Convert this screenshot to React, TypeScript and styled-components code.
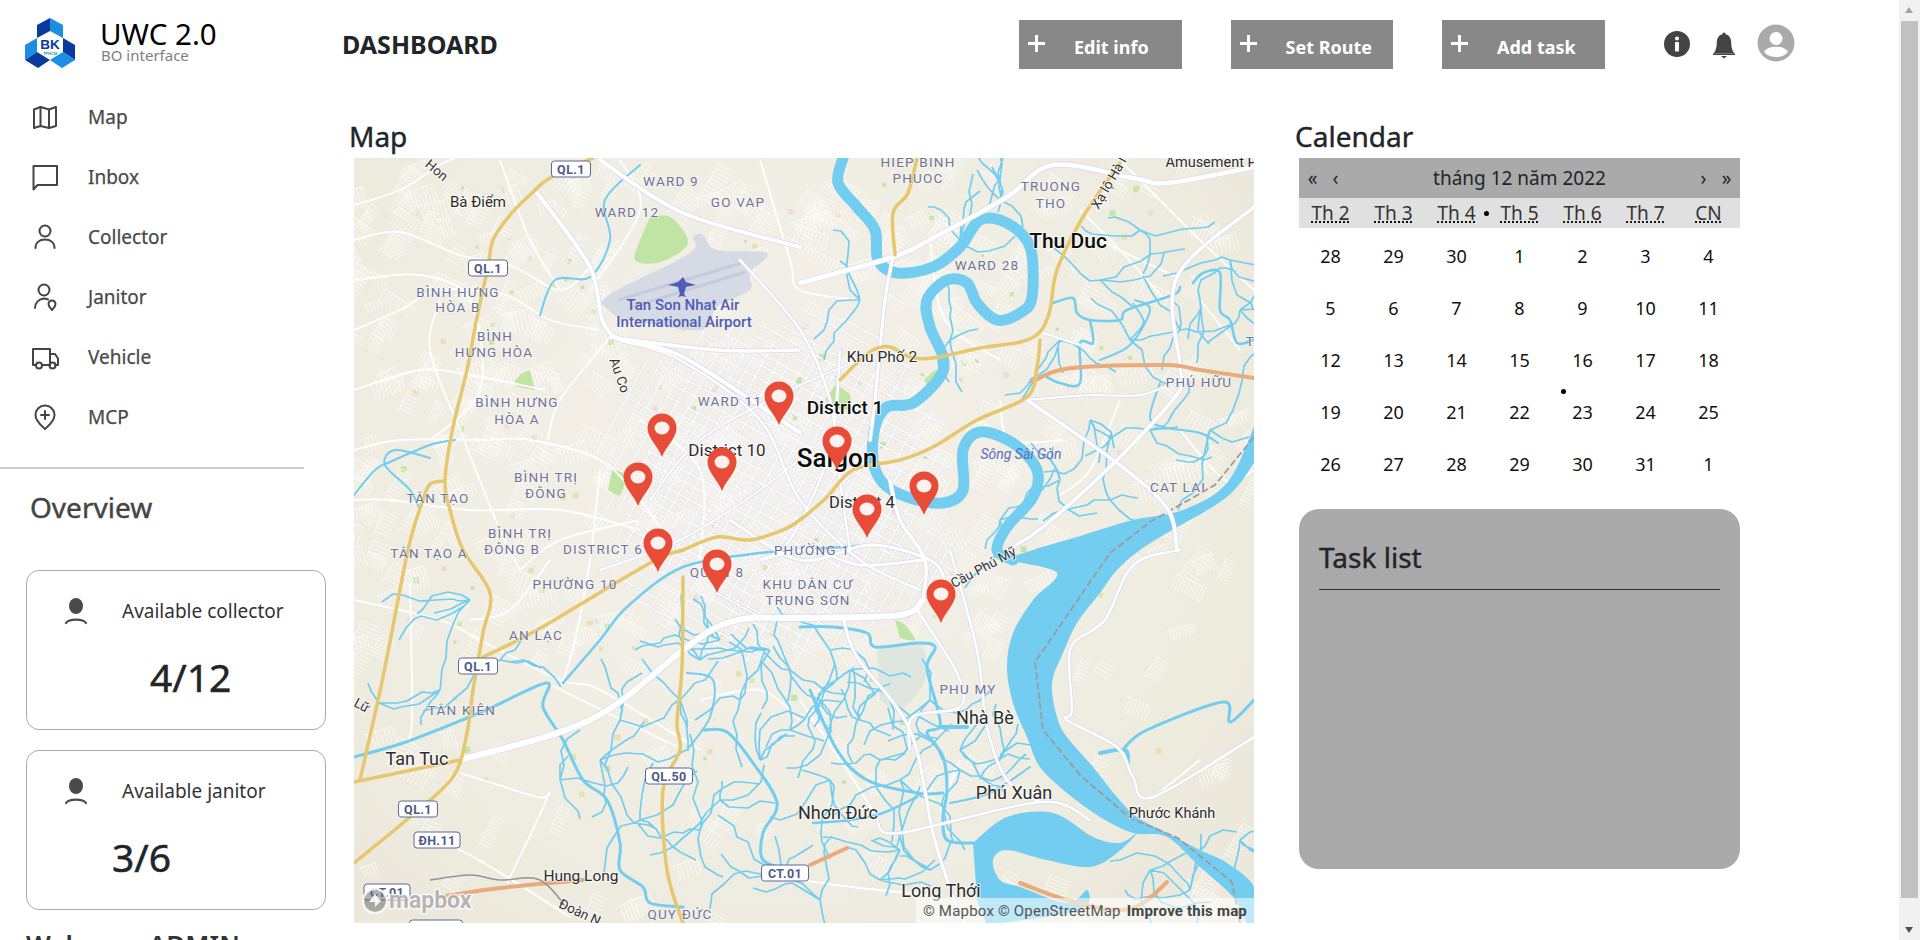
import React from 'react';
import styled, { createGlobalStyle } from 'styled-components';

type Pt = [number, number];

const fontStack = '"Noto Sans", "Open Sans", sans-serif';
const mapFont = 'Roboto, "Noto Sans", sans-serif';

const GlobalStyle = createGlobalStyle`
  body {
    margin: 0;
    background: #fff;
    font-family: ${fontStack};
    color: #212529;
  }
  * {
    box-sizing: border-box;
  }
`;

const Page = styled.div`
  display: flex;
  min-height: 970px;
`;

const ScrollTrack = styled.div`
  position: fixed;
  top: 0;
  right: 0;
  bottom: 0;
  width: 21px;
  background: #f1f1f1;
`;

const ScrollThumb = styled.div`
  position: absolute;
  top: 21px;
  left: 2px;
  width: 17px;
  height: 877px;
  background: #c1c1c1;
`;

const ScrollArrow = styled.i<{ $down?: boolean }>`
  position: absolute;
  left: 6px;
  top: ${(p) => (p.$down ? 927 : 7)}px;
  border-left: 4.5px solid transparent;
  border-right: 4.5px solid transparent;
  ${(p) => (p.$down ? 'border-top: 6px solid #505050;' : 'border-bottom: 6px solid #a3a3a3;')}
`;

const Sidebar = styled.aside`
  width: 304px;
  flex: none;
  display: flex;
  flex-direction: column;
`;

const Brand = styled.div`
  display: flex;
  height: 87px;
  padding: 18px 0 0 25px;
  gap: 25px;
`;

const BrandText = styled.div`
  display: flex;
  flex-direction: column;
  margin-top: -1px;
`;

const BrandTitle = styled.div`
  font-size: 29.5px;
  line-height: 34px;
  color: #000;
`;

const BrandSub = styled.div`
  margin-top: -4px;
  margin-left: 1px;
  font-size: 15px;
  line-height: 16px;
  color: #808080;
`;

const Nav = styled.nav`
  display: flex;
  flex-direction: column;
`;

const NavItem = styled.a`
  height: 60px;
  display: flex;
  align-items: center;
  gap: 28px;
  padding-left: 30px;
  font-size: 19px;
  -webkit-text-stroke: 0.25px #494949;
  color: #494949;
`;

const NavIcon = styled.svg`
  width: 30px;
  height: 30px;
  flex: none;
  fill: none;
  stroke: #444;
  stroke-width: 2;
  stroke-linecap: round;
  stroke-linejoin: round;
`;

const Divider = styled.hr`
  width: 304px;
  height: 2px;
  margin: 20px 0 0;
  border: 0;
  background: #ccc;
`;

const OverviewTitle = styled.h2`
  margin: 20px 0 45px 30px;
  font-size: 28px;
  line-height: 36px;
  font-weight: 400;
  -webkit-text-stroke: 0.4px #444;
  color: #444;
`;

const Cards = styled.div`
  display: flex;
  flex-direction: column;
  gap: 20px;
  margin-left: 26px;
`;

const Card = styled.div`
  width: 300px;
  height: 160px;
  padding: 26px 0 0 37px;
  border: 1px solid #aaa;
  border-radius: 13px;
`;

const CardHead = styled.div`
  display: flex;
  align-items: center;
  gap: 34px;
  font-size: 19px;
  line-height: 28px;
  color: #333;
`;

const CardValue = styled.div<{ $indent: number }>`
  margin: 24px 0 0 ${(p) => p.$indent}px;
  font-size: 39px;
  line-height: 56px;
  -webkit-text-stroke: 0.5px #212529;
  color: #212529;
`;

const Welcome = styled.h2`
  margin: 16px 0 0 26px;
  font-size: 26px;
  line-height: 36px;
  font-weight: 600;
  color: #333;
`;

const Main = styled.main`
  flex: 1;
  min-width: 0;
  display: flex;
  flex-direction: column;
`;

const Header = styled.header`
  display: flex;
  align-items: flex-start;
  height: 118px;
  padding: 20px 0 0 38px;
  gap: 49px;
`;

const PageTitle = styled.h1`
  width: 628px;
  margin: 0;
  font-size: 25px;
  line-height: 48px;
  font-weight: 700;
  color: #212529;
`;

const ActionButton = styled.button`
  width: 162.5px;
  height: 49px;
  padding: 15px 0 0 9px;
  display: flex;
  align-items: flex-start;
  gap: 29px;
  border: 0;
  background: #888;
  color: #fff;
  font-family: ${fontStack};
  font-size: 18px;
  line-height: 24px;
  font-weight: 700;
`;

const HeaderIcons = styled.div`
  display: flex;
  align-items: center;
  height: 48px;
  margin-left: 9px;
`;

const Content = styled.div`
  display: flex;
  padding-left: 45px;
`;

const MapSection = styled.section`
  width: 946px;
  flex: none;
`;

const SectionTitle = styled.h2`
  margin: 0 0 4px;
  font-size: 28px;
  line-height: 36px;
  font-weight: 400;
  -webkit-text-stroke: 0.4px #212529;
  color: #212529;
`;

const MapFrame = styled.div`
  position: relative;
  width: 900px;
  height: 765px;
  margin-left: 5px;
  overflow: hidden;
`;

const MapCanvas = styled.svg`
  display: block;
  width: 900px;
  height: 765px;
`;

const Attribution = styled.div`
  position: absolute;
  right: 0;
  bottom: 0;
  height: 25px;
  padding: 0 7px 0 7px;
  display: flex;
  gap: 6px;
  align-items: center;
  background: rgba(255, 255, 255, 0.55);
  font-family: ${mapFont};
  font-size: 15px;
  letter-spacing: 0.2px;
  color: #555;
`;

const AttributionStrong = styled.span`
  font-weight: 700;
  color: #444;
`;

const CalendarSection = styled.section`
  width: 445px;
  flex: none;
`;

const CalendarBody = styled.div`
  position: relative;
  width: 441px;
  margin-left: 4px;
`;

const CalendarNav = styled.div`
  height: 40px;
  display: flex;
  align-items: center;
  padding: 0 2px;
  background: #aaa;
  font-size: 19px;
  color: #212529;
`;

const CalendarArrow = styled.span`
  width: 23px;
  text-align: center;
`;

const CalendarMonth = styled.span`
  flex: 1;
  text-align: center;
`;

const Weekdays = styled.div`
  display: grid;
  grid-template-columns: repeat(7, 63px);
  height: 30px;
  margin-bottom: 2px;
  background: #e0e0e0;
`;

const Weekday = styled.span`
  font-size: 19px;
  line-height: 31px;
  text-align: center;
  color: #333;
  text-decoration: underline dotted #111;
  text-underline-offset: 2px;
`;

const Days = styled.div`
  display: grid;
  grid-template-columns: repeat(7, 63px);
  grid-auto-rows: 52px;
`;

const Day = styled.span`
  font-size: 18px;
  line-height: 52px;
  text-align: center;
  color: #111;
`;

const StrayDot = styled.i<{ $left: number; $top: number }>`
  position: absolute;
  left: ${(p) => p.$left}px;
  top: ${(p) => p.$top}px;
  width: 5px;
  height: 5px;
  border-radius: 50%;
  background: #000;
`;

const TaskPanel = styled.div`
  width: 441px;
  height: 360px;
  margin: 19px 0 0 4px;
  padding: 29px 20px 0;
  border-radius: 20px;
  background: #aaa;
`;

const TaskTitle = styled.h3`
  margin: 0;
  padding-bottom: 12px;
  font-size: 28px;
  line-height: 39px;
  font-weight: 400;
  -webkit-text-stroke: 0.4px #212529;
  color: #212529;
  border-bottom: 1px solid #333;
`;

const PlaceLabel = styled.text<{ $size: number; $heavy?: boolean }>`
  font-family: ${mapFont};
  font-size: ${(p) => p.$size}px;
  font-weight: ${(p) => (p.$heavy ? 500 : 400)};
  fill: ${(p) => (p.$heavy ? '#0c0c0c' : '#2c2c2c')};
  stroke: rgba(255, 255, 255, 0.7);
  stroke-width: 2px;
  paint-order: stroke;
  text-anchor: middle;
  dominant-baseline: central;
`;

const AreaLabel = styled.text`
  font-family: ${mapFont};
  font-size: 13.5px;
  letter-spacing: 1.2px;
  fill: #6c7398;
  stroke: rgba(255, 255, 255, 0.55);
  stroke-width: 1.5px;
  paint-order: stroke;
  text-anchor: middle;
  dominant-baseline: central;
`;

const AirportLabel = styled.text`
  font-family: ${mapFont};
  font-size: 15px;
  font-weight: 500;
  fill: #4f5cb8;
  text-anchor: middle;
  dominant-baseline: central;
`;

const WaterLabel = styled.text`
  font-family: ${mapFont};
  font-size: 14px;
  font-style: italic;
  fill: #5b6cc0;
  text-anchor: middle;
  dominant-baseline: central;
`;

const RoadLabel = styled.text`
  font-family: ${mapFont};
  font-size: 13.5px;
  fill: #333;
  stroke: rgba(255, 255, 255, 0.7);
  stroke-width: 2px;
  paint-order: stroke;
  text-anchor: middle;
  dominant-baseline: central;
`;

const ShieldLabel = styled.text`
  font-family: ${mapFont};
  font-size: 12.5px;
  font-weight: 700;
  letter-spacing: 0.4px;
  fill: #4e5a86;
  text-anchor: middle;
  dominant-baseline: central;
`;

const MapboxWord = styled.text`
  font-family: ${mapFont};
  font-size: 23px;
  font-weight: 700;
  fill: #7a7a7a;
  fill-opacity: 0.55;
  stroke: rgba(255, 255, 255, 0.85);
  stroke-width: 2.5px;
  paint-order: stroke;
  dominant-baseline: central;
`;

// catmull-rom through the points, keeps rivers and highways from looking like zigzags
const smooth = (pts: Pt[]): string => {
  let d = `M${pts[0][0]} ${pts[0][1]}`;
  for (let i = 0; i < pts.length - 1; i++) {
    const a = pts[Math.max(i - 1, 0)];
    const b = pts[i];
    const c = pts[i + 1];
    const e = pts[Math.min(i + 2, pts.length - 1)];
    const c1x = b[0] + (c[0] - a[0]) / 6;
    const c1y = b[1] + (c[1] - a[1]) / 6;
    const c2x = c[0] - (e[0] - b[0]) / 6;
    const c2y = c[1] - (e[1] - b[1]) / 6;
    d += `C${c1x.toFixed(1)} ${c1y.toFixed(1)} ${c2x.toFixed(1)} ${c2y.toFixed(1)} ${c[0]} ${c[1]}`;
  }
  return d;
};

const poly = (pts: Pt[]): string => `${smooth(pts)}Z`;

const seeded = (seed: number) => () => {
  seed = (seed * 1664525 + 1013904223) % 4294967296;
  return seed / 4294967296;
};

// little combs of parallel streets, this is what gives the tiles their fine texture
const buildTexture = () => {
  const rand = seeded(77);
  let combs = '';
  for (let i = 0; i < 800; i++) {
    const x = 354 + rand() * 900;
    const y = 158 + rand() * 765;
    const keep = x < 1000 && y < 640 ? 1 : y < 560 ? 0.55 : 0.2;
    if (rand() > keep) continue;
    const a = [0.5, 2.07, 1.2][Math.floor(rand() * 3)] + (rand() - 0.5) * 0.3;
    const cx = Math.cos(a);
    const sy = Math.sin(a);
    const count = 4 + Math.floor(rand() * 7);
    const len = 8 + rand() * 14;
    const gap = 2.8 + rand() * 1.6;
    for (let k = 0; k < count; k++) {
      const px = x - sy * gap * k;
      const py = y + cx * gap * k;
      combs += `M${px.toFixed(1)} ${py.toFixed(1)}l${(cx * len).toFixed(1)} ${(sy * len).toFixed(1)}`;
    }
    combs += `M${x.toFixed(1)} ${y.toFixed(1)}l${(-sy * gap * count).toFixed(1)} ${(cx * gap * count).toFixed(1)}`;
  }
  return combs;
};

const buildCityGrid = () => {
  const rand = seeded(5);
  const R = 185;
  let d = '';
  [0.5, 2.07].forEach((a) => {
    const ux = Math.cos(a);
    const uy = Math.sin(a);
    for (let k = -16; k <= 16; k++) {
      const off = k * 11.5 + rand() * 4;
      if (Math.abs(off) >= R) continue;
      const half = Math.sqrt(R * R - off * off) * (0.6 + rand() * 0.4);
      const mx = 775 - uy * off;
      const my = 490 + ux * off;
      d += `M${(mx - ux * half).toFixed(1)} ${(my - uy * half).toFixed(1)}L${(mx + ux * half).toFixed(1)} ${(my + uy * half).toFixed(1)}`;
    }
  });
  return d;
};

const buildSpecks = () => {
  const rand = seeded(99);
  const items: { x: number; y: number; s: number; c: string }[] = [];
  const colours = ['#c3e5a6', '#ebdcdd', '#e6e0b4', '#c3e5a6', '#e6e0b4'];
  for (let i = 0; i < 130; i++) {
    const x = 400 + rand() * 760;
    const y = 180 + rand() * 620;
    items.push({ x, y, s: 2.5 + rand() * 4, c: colours[i % colours.length] });
  }
  return items;
};

const buildCanals = () => {
  const rand = seeded(1234);
  const starts: Pt[] = [
    [700, 660], [740, 700], [720, 800], [760, 760], [820, 700], [860, 720], [880, 760], [830, 780],
    [900, 780], [930, 700], [600, 760], [560, 780], [640, 820], [700, 830], [770, 880], [820, 900],
    [880, 880], [960, 770], [1000, 760], [1060, 340], [1090, 420], [1130, 340], [1200, 300], [1230, 260],
    [1150, 430], [1210, 430], [1140, 230], [1110, 500], [1060, 480], [1150, 870], [1190, 890], [1240, 840],
    [880, 690], [830, 650], [790, 670], [470, 600], [500, 660], [440, 690], [620, 720], [1000, 520],
    [960, 240], [1000, 180], [950, 340], [860, 300], [1180, 330], [1100, 280], [720, 640], [770, 650],
    [790, 730], [850, 670], [900, 850], [930, 870], [680, 700], [960, 750], [1000, 200], [1240, 310],
  ];
  let d = '';
  starts.forEach(([sx, sy]) => {
    for (let b = 0; b < 4; b++) {
      let x = sx;
      let y = sy;
      let angle = rand() * Math.PI * 2;
      d += `M${x} ${y}`;
      const steps = 3 + Math.floor(rand() * 5);
      for (let s = 0; s < steps; s++) {
        angle += (rand() - 0.5) * 1.5;
        const len = 6 + rand() * 13;
        x += Math.cos(angle) * len;
        y += Math.sin(angle) * len;
        d += `L${x.toFixed(0)} ${y.toFixed(0)}`;
      }
    }
  });
  return d;
};

const texture = buildTexture();
const cityGrid = buildCityGrid();
const specks = buildSpecks();
const canals = buildCanals();

const highways: Pt[][] = [
  [[593, 158], [550, 178], [533, 192], [510, 215], [493, 240], [488, 267], [477, 317], [467, 370], [453, 427], [445, 480], [450, 510], [463, 550], [490, 593], [483, 633], [473, 690], [467, 733], [453, 777], [410, 817], [354, 863]],
  [[445, 481], [430, 484], [422, 503], [408, 550], [383, 677], [360, 780]],
  [[354, 782], [460, 760]],
  [[483, 657], [537, 630], [650, 563], [683, 550], [717, 537], [750, 540], [783, 530], [800, 520], [827, 497], [853, 470], [900, 460], [933, 447], [977, 420], [1027, 397], [1037, 367], [1040, 340]],
  [[840, 380], [857, 363], [873, 350], [890, 347], [910, 357], [933, 358], [980, 348], [1020, 342], [1040, 332], [1050, 310], [1057, 270], [1083, 217], [1120, 163]],
  [[917, 158], [908, 193], [893, 213], [895, 255]],
  [[683, 577], [682, 667], [677, 723], [680, 750], [663, 790], [667, 870], [683, 923]],
];

const tollways: Pt[][] = [
  [[1032, 382], [1053, 372], [1083, 367], [1167, 365], [1200, 370], [1254, 378]],
  [[440, 897], [500, 888], [583, 880]],
  [[810, 865], [847, 848]],
  [[1020, 883], [1067, 900], [1117, 910], [1143, 903], [1167, 882]],
];

const mainRoads: { pts: Pt[]; w: number }[] = [
  { w: 6, pts: [[460, 760], [590, 720], [683, 650], [717, 627], [750, 618], [800, 618], [900, 615], [923, 600]] },
  { w: 4.5, pts: [[800, 283], [893, 257], [933, 238], [1007, 197], [1053, 165], [1133, 178], [1167, 183], [1254, 167]] },
  { w: 4, pts: [[600, 160], [683, 213], [800, 247]] },
  { w: 4, pts: [[537, 193], [590, 267], [610, 333], [683, 357], [800, 433]] },
  { w: 3.5, pts: [[610, 337], [717, 350], [800, 350]] },
  { w: 3.5, pts: [[1254, 207], [1177, 277], [1180, 367], [1180, 390], [1117, 460], [1043, 527], [1007, 550]] },
  { w: 3.5, pts: [[1027, 400], [1117, 463], [1167, 508], [1177, 550]] },
  { w: 2.5, pts: [[1180, 550], [1147, 557], [1127, 573], [1107, 617], [1093, 630], [1070, 650], [1072, 710], [1067, 720], [1117, 747], [1133, 777], [1153, 797], [1254, 737]] },
  { w: 2.5, pts: [[877, 820], [900, 833], [1040, 802], [1090, 820]] },
  { w: 3, pts: [[843, 617], [857, 657], [910, 730], [933, 833], [953, 897], [965, 923]] },
  { w: 2.5, pts: [[917, 610], [957, 673], [960, 707], [913, 717], [910, 750]] },
  { w: 2.5, pts: [[950, 550], [977, 650], [987, 727], [1007, 780], [1040, 802]] },
  { w: 2.5, pts: [[610, 337], [680, 360], [760, 420], [800, 500], [860, 560], [920, 590]] },
  { w: 2.5, pts: [[740, 260], [800, 330], [830, 400], [840, 480], [850, 550]] },
  { w: 2.5, pts: [[840, 350], [830, 450], [790, 540], [760, 560]] },
  { w: 3, pts: [[893, 257], [885, 300], [875, 400], [870, 440]] },
  { w: 2, pts: [[650, 500], [700, 440], [790, 390], [860, 360]] },
  { w: 2, pts: [[600, 570], [680, 540], [760, 490], [835, 430]] },
  { w: 3, pts: [[730, 520], [800, 560], [870, 545], [930, 560], [945, 580]] },
  { w: 3, pts: [[760, 560], [810, 550], [860, 565], [923, 560]] },
  { w: 3.5, pts: [[923, 600], [925, 560], [900, 520], [890, 480]] },
  { w: 2, pts: [[717, 593], [760, 617]] },
  { w: 2, pts: [[1027, 400], [1090, 395], [1140, 395], [1180, 380]] },
  { w: 2, pts: [[1040, 332], [1080, 345]] },
];

const sideRoads: Pt[][] = [
  [[354, 240], [400, 232], [460, 255], [510, 265], [560, 290], [590, 267]],
  [[354, 330], [400, 310], [440, 290], [505, 295], [550, 320], [600, 330]],
  [[354, 205], [400, 190], [440, 165], [455, 158]],
  [[354, 450], [400, 440], [480, 440], [530, 440], [600, 460], [640, 500], [662, 530]],
  [[354, 500], [390, 500], [470, 510], [560, 510], [640, 530]],
  [[440, 300], [430, 350], [460, 430], [500, 530], [520, 570]],
  [[354, 600], [440, 620], [480, 640], [560, 680], [600, 690], [700, 750]],
  [[460, 773], [537, 797], [547, 798], [507, 883]],
  [[413, 833], [460, 850], [507, 877], [570, 917]],
  [[547, 683], [677, 747]],
  [[410, 583], [412, 717], [407, 743]],
  [[520, 570], [560, 540], [640, 520]],
  [[610, 337], [560, 400], [548, 440]],
  [[600, 470], [590, 560], [575, 640], [560, 690]],
  [[640, 420], [700, 470], [700, 560]],
  [[1000, 400], [1010, 440], [1063, 440]],
  [[1100, 240], [1140, 260], [1177, 277]],
  [[1200, 300], [1240, 350]],
  [[1180, 430], [1225, 480], [1254, 470]],
  [[800, 700], [860, 790], [877, 820]],
  [[800, 880], [860, 888], [930, 895]],
  [[1200, 760], [1150, 800]],
  [[354, 280], [420, 275], [470, 300], [480, 390], [430, 440]],
  [[354, 390], [420, 370], [470, 375], [545, 390]],
  [[500, 160], [530, 240], [560, 290]],
  [[620, 160], [640, 210], [590, 290]],
  [[760, 160], [790, 260], [800, 290], [860, 300]],
  [[930, 240], [945, 320], [1000, 360]],
  [[1080, 210], [1120, 250], [1165, 300]],
  [[1120, 160], [1200, 240], [1254, 290]],
  [[1120, 400], [1090, 470], [1060, 495]],
  [[550, 560], [510, 610], [470, 620]],
  [[700, 700], [760, 690], [800, 720]],
  [[960, 760], [940, 810]],
];

const mainCanals: { pts: Pt[]; w: number }[] = [
  { w: 3, pts: [[493, 707], [547, 683], [543, 707], [563, 740], [583, 780], [607, 800], [620, 843], [620, 870], [643, 887], [650, 903], [683, 907]] },
  { w: 3, pts: [[354, 757], [403, 743], [467, 718], [493, 707]] },
  { w: 2, pts: [[687, 673], [713, 680], [710, 717], [687, 750]] },
  { w: 3, pts: [[703, 730], [727, 732], [753, 763], [777, 803], [763, 833], [763, 860], [790, 870]] },
  { w: 2.5, pts: [[563, 683], [600, 640], [627, 607], [683, 567], [760, 553], [800, 550], [870, 545]] },
  { w: 2.5, pts: [[1053, 303], [1073, 298], [1077, 313], [1090, 320], [1120, 320], [1127, 310], [1173, 295], [1180, 287]] },
  { w: 2.5, pts: [[1090, 320], [1093, 343], [1080, 343], [1080, 383], [1060, 383], [1047, 377]] },
  { w: 2.5, pts: [[1193, 283], [1203, 273], [1220, 273], [1220, 310], [1230, 320], [1237, 343], [1253, 340]] },
  { w: 2, pts: [[1160, 383], [1150, 417], [1163, 427], [1200, 433], [1218, 443]] },
  { w: 3, pts: [[1125, 747], [1147, 730], [1223, 702], [1230, 722], [1254, 700]] },
  { w: 4, pts: [[1100, 753], [1125, 750], [1128, 763]] },
  { w: 3, pts: [[800, 627], [833, 627], [867, 633], [875, 647], [917, 643], [935, 647], [927, 667], [937, 707], [940, 727], [927, 733], [943, 757], [947, 790], [943, 817], [947, 840], [973, 843]] },
  { w: 4, pts: [[940, 727], [967, 727]] },
  { w: 3, pts: [[810, 690], [837, 750], [867, 780], [917, 793], [943, 793]] },
  { w: 2.5, pts: [[917, 797], [883, 813], [850, 820], [813, 823]] },
  { w: 2, pts: [[950, 803], [990, 793], [1030, 767]] },
  { w: 2, pts: [[430, 458], [395, 450], [385, 465], [410, 490], [420, 510]] },
  { w: 2, pts: [[350, 500], [375, 470], [390, 462], [430, 445], [455, 440]] },
  { w: 2, pts: [[540, 315], [555, 280], [590, 277], [610, 240], [605, 200], [640, 165]] },
  { w: 2, pts: [[1100, 360], [1130, 345], [1150, 310], [1135, 300]] },
];

const sagonRiver: Pt[] = [[843, 158], [838, 183], [857, 207], [875, 230], [878, 260], [897, 273], [933, 267], [960, 247], [980, 220], [1007, 223], [1030, 247], [1032, 297], [1020, 313], [997, 320], [977, 303], [967, 283], [947, 280], [927, 300], [930, 327], [943, 357], [940, 377], [913, 403], [887, 407], [875, 427], [873, 460], [883, 483], [907, 497], [943, 503], [963, 490], [963, 450], [980, 432], [1013, 443], [1037, 470], [1033, 497], [1007, 527], [997, 550], [1013, 560]];

const estuary: Pt[] = [[1254, 427], [1227, 483], [1183, 510], [1133, 520], [1077, 537], [1033, 550], [1013, 560], [1057, 573], [1033, 600], [1013, 633], [1007, 667], [1013, 703], [1027, 737], [1040, 767], [1067, 793], [1100, 817], [1133, 833], [1167, 837], [1200, 867], [1233, 897], [1247, 923], [1254, 923], [1254, 887], [1227, 863], [1200, 850], [1167, 833], [1137, 817], [1117, 797], [1093, 767], [1067, 737], [1057, 717], [1052, 683], [1063, 653], [1077, 623], [1100, 593], [1117, 570], [1140, 550], [1167, 533], [1227, 497], [1254, 463]];

const bay: Pt[] = [[973, 843], [1007, 817], [1053, 813], [1093, 837], [1120, 843], [1137, 833], [1117, 853], [1090, 867], [1047, 860], [1007, 850], [993, 860], [1000, 880], [1020, 887], [1067, 903], [1087, 890], [1080, 910], [1000, 923], [987, 923], [977, 900]];

const places: { t: string; x: number; y: number; s: number; heavy?: boolean }[] = [
  { t: 'Bà Điểm', x: 478, y: 202, s: 15 },
  { t: 'Thu Duc', x: 1068, y: 241, s: 21, heavy: true },
  { t: 'Khu Phố 2', x: 882, y: 357, s: 15.5 },
  { t: 'District 1', x: 845, y: 407, s: 19, heavy: true },
  { t: 'District 10', x: 727, y: 450, s: 17 },
  { t: 'Saigon', x: 837, y: 458, s: 26, heavy: true },
  { t: 'District 4', x: 862, y: 502, s: 16.5 },
  { t: 'Tan Tuc', x: 417, y: 758, s: 18 },
  { t: 'Hung Long', x: 581, y: 876, s: 15.5 },
  { t: 'Nhà Bè', x: 985, y: 717, s: 18 },
  { t: 'Phú Xuân', x: 1014, y: 792, s: 18 },
  { t: 'Nhơn Đức', x: 838, y: 812, s: 18 },
  { t: 'Phước Khánh', x: 1172, y: 813, s: 14.5 },
  { t: 'Long Thới', x: 941, y: 890, s: 18 },
];

const areas: { t: string; x: number; y: number }[] = [
  { t: 'WARD 9', x: 671, y: 181 }, { t: 'GO VAP', x: 738, y: 202 }, { t: 'WARD 12', x: 627, y: 212 },
  { t: 'BÌNH HƯNG', x: 458, y: 292 }, { t: 'HÒA B', x: 458, y: 307 }, { t: 'BÌNH', x: 495, y: 336 },
  { t: 'HƯNG HÒA', x: 494, y: 352 }, { t: 'BÌNH HƯNG', x: 517, y: 402 }, { t: 'HÒA A', x: 517, y: 419 },
  { t: 'WARD 11', x: 730, y: 401 }, { t: 'BÌNH TRỊ', x: 546, y: 477 }, { t: 'ĐÔNG', x: 546, y: 493 },
  { t: 'TÂN TẠO', x: 438, y: 498 }, { t: 'BÌNH TRỊ', x: 520, y: 533 }, { t: 'ĐÔNG B', x: 512, y: 549 },
  { t: 'DISTRICT 6', x: 603, y: 549 }, { t: 'TÂN TẠO A', x: 429, y: 553 }, { t: 'PHƯỜNG 10', x: 575, y: 584 },
  { t: 'PHƯỜNG 1', x: 812, y: 550 }, { t: 'QUẬN 8', x: 717, y: 572 }, { t: 'KHU DÂN CƯ', x: 808, y: 584 },
  { t: 'TRUNG SƠN', x: 808, y: 600 }, { t: 'AN LẠC', x: 536, y: 635 }, { t: 'TÂN KIÊN', x: 462, y: 710 },
  { t: 'QUY ĐỨC', x: 680, y: 914 }, { t: 'HIEP BINH', x: 918, y: 162 }, { t: 'PHUOC', x: 918, y: 178 },
  { t: 'TRUONG', x: 1051, y: 186 }, { t: 'THO', x: 1051, y: 203 }, { t: 'WARD 28', x: 987, y: 265 },
  { t: 'PHÚ HỮU', x: 1199, y: 382 }, { t: 'CAT LAI', x: 1178, y: 487 }, { t: 'PHU MY', x: 968, y: 689 },
  { t: 'TRU', x: 1260, y: 341 },
];

const roadNames: { t: string; x: number; y: number; r: number }[] = [
  { t: 'Hon', x: 437, y: 170, r: 40 },
  { t: 'Au Co', x: 620, y: 375, r: 70 },
  { t: 'Xạ lộ Hà N', x: 1110, y: 180, r: -60 },
  { t: 'Cầu Phú Mỹ', x: 983, y: 567, r: -28 },
  { t: 'Đoàn N', x: 580, y: 912, r: 25 },
  { t: 'Lữ', x: 362, y: 705, r: 28 },
];

const shields: { t: string; x: number; y: number; w: number }[] = [
  { t: 'QL.1', x: 571, y: 169, w: 39 },
  { t: 'QL.1', x: 488, y: 268, w: 39 },
  { t: 'QL.1', x: 478, y: 666, w: 39 },
  { t: 'QL.1', x: 418, y: 809, w: 39 },
  { t: 'ĐH.11', x: 437, y: 840, w: 46 },
  { t: 'QL.50', x: 669, y: 776, w: 47 },
  { t: 'CT.01', x: 785, y: 873, w: 47 },
  { t: 'CT.01', x: 387, y: 892, w: 46 },
  { t: 'CT.01', x: 436, y: 928, w: 53 },
];

const pins: Pt[] = [[779, 425], [662, 457], [722, 491], [638, 506], [658, 572], [717, 593], [837, 470], [924, 515], [867, 538], [941, 623]];

const greens: Pt[][] = [
  [[650, 217], [670, 217], [687, 237], [683, 250], [657, 263], [635, 260], [640, 240]],
  [[530, 370], [520, 375], [515, 385], [535, 390]],
  [[835, 385], [850, 395], [845, 410], [825, 400]],
  [[612, 470], [625, 475], [620, 495], [608, 490]],
  [[935, 370], [943, 372], [930, 385], [924, 380]],
  [[895, 620], [905, 625], [915, 640], [900, 638]],
];

const TaskMap: React.FC = () => (
  <MapCanvas viewBox="354 158 900 765" role="img" aria-label="Map">
    <defs>
      <radialGradient id="cityGlow" cx="770" cy="470" r="560" gradientUnits="userSpaceOnUse">
        <stop offset="0" stopColor="#f4f0ea" />
        <stop offset="0.6" stopColor="#f0ede3" />
        <stop offset="1" stopColor="#ece9dc" />
      </radialGradient>
    </defs>
    <rect x="354" y="158" width="900" height="765" fill="url(#cityGlow)" />
    {specks.map((s, i) => (
      <rect key={i} x={s.x} y={s.y} width={s.s} height={s.s} fill={s.c} />
    ))}
    <path d={texture} stroke="#fcfbf7" strokeWidth="0.8" fill="none" />
    <path d={cityGrid} stroke="#d9dcea" strokeWidth="2.2" fill="none" />
    <path d={cityGrid} stroke="#fff" strokeWidth="1.4" fill="none" />
    {greens.map((g, i) => (
      <path key={i} d={poly(g)} fill="#c0e4a3" />
    ))}
    <path d={poly([[600, 303], [617, 290], [690, 253], [693, 237], [703, 235], [717, 250], [767, 253], [750, 273], [750, 290], [717, 307], [700, 330], [617, 317]])} fill="#d6dae5" />
    <path d="M618 300L745 262M632 307L745 272" stroke="#c6cbdc" strokeWidth="3" fill="none" />
    <path d={poly([[877, 650], [920, 645], [925, 680], [900, 710], [880, 700]])} fill="#dfe6df" />
    {sideRoads.map((pts, i) => (
      <path key={i} d={smooth(pts)} stroke="#fff" strokeWidth="1.8" fill="none" />
    ))}
    <path d={canals} stroke="#72cdf0" strokeWidth="1.7" fill="none" strokeLinejoin="round" />
    {mainCanals.map((c, i) => (
      <path key={i} d={smooth(c.pts)} stroke="#72cdf0" strokeWidth={c.w} fill="none" strokeLinecap="round" />
    ))}
    <path d={smooth(sagonRiver)} stroke="#72cdf0" strokeWidth="11" fill="none" strokeLinecap="round" strokeLinejoin="round" />
    <path d={poly(estuary)} fill="#72cdf0" />
    <path d={poly(bay)} fill="#72cdf0" />
    <path d="M1254 437L1215 485L1150 522L1110 553L1035 662L1043 730L1080 775L1130 818L1178 838L1232 882L1240 923" stroke="#9a9a9f" strokeWidth="1.8" strokeDasharray="7 3" fill="none" />
    {mainRoads.map((r, i) => (
      <path key={i} d={smooth(r.pts)} stroke="#d7dbec" strokeWidth={r.w + 1.4} fill="none" strokeLinecap="round" />
    ))}
    {mainRoads.map((r, i) => (
      <path key={i} d={smooth(r.pts)} stroke="#fff" strokeWidth={r.w} fill="none" strokeLinecap="round" />
    ))}
    {tollways.map((pts, i) => (
      <path key={i} d={smooth(pts)} stroke="#e9aa7c" strokeWidth="4" fill="none" strokeLinecap="round" />
    ))}
    {highways.map((pts, i) => (
      <path key={i} d={smooth(pts)} stroke="#e6c76f" strokeWidth="3.5" fill="none" strokeLinecap="round" strokeLinejoin="round" />
    ))}
    <path d={smooth([[430, 880], [470, 875], [500, 880], [540, 880], [570, 912]])} stroke="#8f949e" strokeWidth="1.5" fill="none" />
    <path d="M683 277l3 5 10 3-10 2-2 7 2 3-4-1-4 1 2-3-2-7-10-2 10-3z" fill="#4f5cb8" />
    <AirportLabel x={683} y={305}>Tan Son Nhat Air</AirportLabel>
    <AirportLabel x={684} y={322}>International Airport</AirportLabel>
    <WaterLabel x={1021} y={454}>Sông Sài Gòn</WaterLabel>
    <PlaceLabel x={1215} y={162} $size={14.5}>Amusement Pa</PlaceLabel>
    {areas.map((a, i) => (
      <AreaLabel key={i} x={a.x} y={a.y}>{a.t}</AreaLabel>
    ))}
    {places.map((p, i) => (
      <PlaceLabel key={i} x={p.x} y={p.y} $size={p.s} $heavy={p.heavy}>{p.t}</PlaceLabel>
    ))}
    {roadNames.map((r, i) => (
      <RoadLabel key={i} x={r.x} y={r.y} transform={`rotate(${r.r} ${r.x} ${r.y})`}>{r.t}</RoadLabel>
    ))}
    {shields.map((s, i) => (
      <g key={i}>
        <rect x={s.x - s.w / 2} y={s.y - 8} width={s.w} height={16} rx={3} fill="#fff" stroke="#5e6896" strokeWidth="1" />
        <ShieldLabel x={s.x} y={s.y + 0.5}>{s.t}</ShieldLabel>
      </g>
    ))}
    {pins.map(([x, y], i) => (
      <g key={i} transform={`translate(${x} ${y})`}>
        <path d="M0 0C-4 -11 -14.5 -19 -14.5 -29A14.5 14.5 0 1 1 14.5 -29C14.5 -19 4 -11 0 0Z" fill="#e84b37" />
        <ellipse cx="0" cy="-29" rx="7.5" ry="6.5" fill="#fff" fillOpacity="0.92" />
      </g>
    ))}
    <circle cx="375" cy="901" r="12" fill="#6f6f6f" fillOpacity="0.55" stroke="#fff" strokeOpacity="0.85" strokeWidth="2.5" />
    <path d="M375 894l6 7-6 6v-5h-6z" fill="#fff" fillOpacity="0.9" />
    <MapboxWord x={389} y={900}>mapbox</MapboxWord>
  </MapCanvas>
);

const weekdays = ['Th 2', 'Th 3', 'Th 4', 'Th 5', 'Th 6', 'Th 7', 'CN'];
const calendarDays = [28, 29, 30, 1, 2, 3, 4, 5, 6, 7, 8, 9, 10, 11, 12, 13, 14, 15, 16, 17, 18, 19, 20, 21, 22, 23, 24, 25, 26, 27, 28, 29, 30, 31, 1];

const navItems: { label: string; icon: React.ReactNode }[] = [
  {
    label: 'Map',
    icon: (
      <>
        <path d="M4 7.5L10.5 5L19 7.5L26 5V24L19 26L10.5 24L4 26Z" />
        <path d="M10.5 5V24M19 7.5V26" />
      </>
    ),
  },
  {
    label: 'Inbox',
    icon: <path d="M3.5 4H27V23H7.5L3.5 27.5Z" />,
  },
  {
    label: 'Collector',
    icon: (
      <>
        <circle cx="15" cy="9" r="5.5" />
        <path d="M5.5 26C5.5 20.5 9.5 17.5 15 17.5S24.5 20.5 24.5 26" />
      </>
    ),
  },
  {
    label: 'Janitor',
    icon: (
      <>
        <circle cx="14" cy="8" r="5.5" />
        <path d="M5 26C5 20.5 9 17 14 16.5C15.5 16.5 17 17 18 17.5" />
        <path d="M25.5 22C25.5 25 23 27 22 28C21 27 18.5 25 18.5 22A3.5 3.5 0 0 1 25.5 22Z" />
      </>
    ),
  },
  {
    label: 'Vehicle',
    icon: (
      <>
        <path d="M6 23H3V7H20V23H12" />
        <path d="M20 12H25L28 16.5V23H25" />
        <path d="M20 23H19" />
        <circle cx="9" cy="23.5" r="3" />
        <circle cx="22.5" cy="23.5" r="3" />
      </>
    ),
  },
  {
    label: 'MCP',
    icon: (
      <>
        <path d="M15 27C12.5 24.5 5.5 19.5 5.5 13A9.5 9.5 0 0 1 24.5 13C24.5 19.5 17.5 24.5 15 27Z" />
        <path d="M15 9V17M11 13H19" />
      </>
    ),
  },
];

const Logo: React.FC = () => (
  <svg width="50" height="51" viewBox="0 0 50 51" style={{ flex: 'none' }}>
    <polygon points="25,13 38,20 38,34 25,41 12,34 12,20" fill="#fff" />
    <polygon points="25,0 12,7 12,20 25,13" fill="#0a3aa0" />
    <polygon points="25,0 38,7 38,20 25,13" fill="#1b8de3" />
    <polygon points="12,20 0,27 0,42 12,34" fill="#1b8de3" />
    <polygon points="0,42 13,50 25,42 12,34" fill="#0a3aa0" />
    <polygon points="38,20 50,27 50,42 38,34" fill="#0a3aa0" />
    <polygon points="50,42 37,50 25,42 38,34" fill="#1b8de3" />
    <text x="25" y="31" textAnchor="middle" fontFamily="Liberation Sans, sans-serif" fontWeight="700" fontSize="13.5" fill="#0a3aa0">BK</text>
    <text x="25" y="37" textAnchor="middle" fontFamily="Liberation Sans, sans-serif" fontWeight="700" fontSize="4" fill="#1b8de3">TPHCM</text>
  </svg>
);

const PersonGlyph: React.FC = () => (
  <svg width="24" height="28" viewBox="0 0 24 28" style={{ flex: 'none' }}>
    <ellipse cx="12" cy="9" rx="7" ry="8" fill="#4a4a4a" />
    <path d="M2 26C5 21.5 19 21.5 22 26" fill="none" stroke="#4a4a4a" strokeWidth="2.2" strokeLinecap="round" />
  </svg>
);

const InfoGlyph: React.FC = () => (
  <svg width="28" height="28" viewBox="0 0 28 28" style={{ flex: 'none' }}>
    <circle cx="14" cy="14" r="13" fill="#444" />
    <circle cx="14" cy="8.5" r="2" fill="#fff" />
    <rect x="12" y="12" width="4" height="9.5" rx="0.8" fill="#fff" />
  </svg>
);

const BellGlyph: React.FC = () => (
  <svg width="24" height="28" viewBox="0 0 24 28" style={{ flex: 'none', marginLeft: 21, marginTop: 1 }}>
    <path d="M12 1.5C13 1.5 13.6 2.3 13.6 3.2C17.5 4 19.2 7.5 19.2 11.5C19.2 16 20 19.5 22.5 22.5H1.5C4 19.5 4.8 16 4.8 11.5C4.8 7.5 6.5 4 10.4 3.2C10.4 2.3 11 1.5 12 1.5Z" fill="#444" />
    <path d="M1 22.5H23V24H1Z" fill="#444" />
    <path d="M9 25H15L12 27.5Z" fill="#444" />
  </svg>
);

const AvatarGlyph: React.FC = () => (
  <svg width="38" height="38" viewBox="0 0 38 38" style={{ flex: 'none', marginLeft: 21, marginTop: -3 }}>
    <circle cx="19" cy="19" r="18.5" fill="#aaa" />
    <circle cx="19" cy="14.5" r="6.5" fill="#fff" />
    <path d="M7 28C10 23.5 14.5 22.8 19 22.8S28 23.5 31 28C28 31.5 24 33 19 33S10 31.5 7 28Z" fill="#fff" />
  </svg>
);

const PlusGlyph: React.FC = () => (
  <svg width="17" height="17" viewBox="0 0 17 17" style={{ flex: 'none' }}>
    <path d="M8.5 0V17M0 8.5H17" stroke="#fff" strokeWidth="3" />
  </svg>
);

const App: React.FC = () => (
  <>
    <GlobalStyle />
    <Page>
      <Sidebar>
        <Brand>
          <Logo />
          <BrandText>
            <BrandTitle>UWC 2.0</BrandTitle>
            <BrandSub>BO interface</BrandSub>
          </BrandText>
        </Brand>
        <Nav>
          {navItems.map((item) => (
            <NavItem key={item.label}>
              <NavIcon viewBox="0 0 30 30">{item.icon}</NavIcon>
              {item.label}
            </NavItem>
          ))}
        </Nav>
        <Divider />
        <OverviewTitle>Overview</OverviewTitle>
        <Cards>
          <Card>
            <CardHead>
              <PersonGlyph />
              Available collector
            </CardHead>
            <CardValue $indent={86}>4/12</CardValue>
          </Card>
          <Card>
            <CardHead>
              <PersonGlyph />
              Available janitor
            </CardHead>
            <CardValue $indent={48}>3/6</CardValue>
          </Card>
        </Cards>
        <Welcome>Welcome ADMIN</Welcome>
      </Sidebar>
      <Main>
        <Header>
          <PageTitle>DASHBOARD</PageTitle>
          {['Edit info', 'Set Route', 'Add task'].map((label) => (
            <ActionButton key={label}>
              <PlusGlyph />
              <span>{label}</span>
            </ActionButton>
          ))}
          <HeaderIcons>
            <InfoGlyph />
            <BellGlyph />
            <AvatarGlyph />
          </HeaderIcons>
        </Header>
        <Content>
          <MapSection>
            <SectionTitle>Map</SectionTitle>
            <MapFrame>
              <TaskMap />
              <Attribution>
                <span>© Mapbox © OpenStreetMap</span>
                <AttributionStrong>Improve this map</AttributionStrong>
              </Attribution>
            </MapFrame>
          </MapSection>
          <CalendarSection>
            <SectionTitle>Calendar</SectionTitle>
            <CalendarBody>
              <CalendarNav>
                <CalendarArrow>«</CalendarArrow>
                <CalendarArrow>‹</CalendarArrow>
                <CalendarMonth>tháng 12 năm 2022</CalendarMonth>
                <CalendarArrow>›</CalendarArrow>
                <CalendarArrow>»</CalendarArrow>
              </CalendarNav>
              <Weekdays>
                {weekdays.map((w) => (
                  <Weekday key={w}>{w}</Weekday>
                ))}
              </Weekdays>
              <Days>
                {calendarDays.map((d, i) => (
                  <Day key={i}>{d}</Day>
                ))}
              </Days>
              <StrayDot $left={185} $top={53} />
              <StrayDot $left={262} $top={231} />
            </CalendarBody>
            <TaskPanel>
              <TaskTitle>Task list</TaskTitle>
            </TaskPanel>
          </CalendarSection>
        </Content>
      </Main>
    </Page>
    <ScrollTrack>
      <ScrollArrow />
      <ScrollThumb />
      <ScrollArrow $down />
    </ScrollTrack>
  </>
);

export default App;
